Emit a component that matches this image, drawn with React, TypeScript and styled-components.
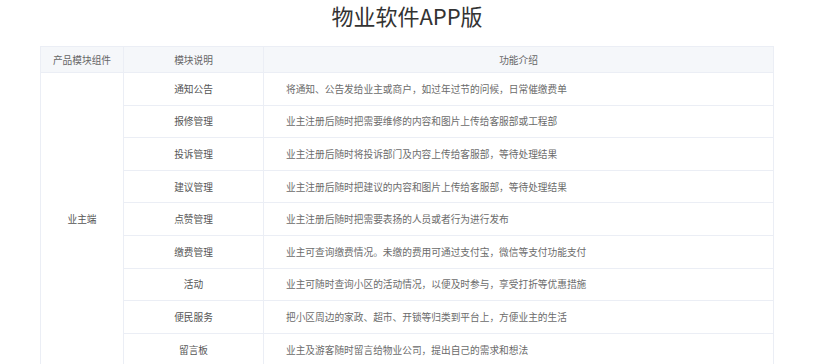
import styled, { createGlobalStyle } from "styled-components";

const GlobalStyle = createGlobalStyle`
  body {
    margin: 0;
    background: #fff;
    font-family: "Noto Sans CJK SC", "Noto Sans", sans-serif;
  }
`;

const Wrapper = styled.section`
  width: 734px;
  margin-left: 40px;
  display: flex;
  flex-direction: column;
  align-items: center;
`;

const Title = styled.h2`
  margin: 0;
  height: 46px;
  font-size: 22px;
  font-weight: 400;
  line-height: 30px;
  color: #333;
`;

const Table = styled.table`
  width: 100%;
  border-collapse: collapse;
  table-layout: fixed;
  border: 1px solid #ebeef5;
  font-size: 9.7px;
`;

const HeadCell = styled.th<{ $width?: number }>`
  width: ${(p) => (p.$width ? `${p.$width}px` : "auto")};
  height: 25px;
  padding: 0;
  background: #f5f7fa;
  border: 1px solid #ebeef5;
  color: #666;
  font-weight: 400;
  text-align: center;
`;

const Cell = styled.td<{ $desc?: boolean }>`
  height: 31.6px;
  padding: 0 ${(p) => (p.$desc ? "22px" : "0")};
  border: 1px solid #ebeef5;
  color: ${(p) => (p.$desc ? "#6b6b6b" : "#555")};
  text-align: ${(p) => (p.$desc ? "left" : "center")};
  white-space: nowrap;
`;

const GroupCell = styled.td`
  padding: 0;
  border: 1px solid #ebeef5;
  color: #555;
  text-align: center;
  vertical-align: middle;
`;

const rows: [string, string][] = [
  ["通知公告", "将通知、公告发给业主或商户，如过年过节的问候，日常催缴费单"],
  ["报修管理", "业主注册后随时把需要维修的内容和图片上传给客服部或工程部"],
  ["投诉管理", "业主注册后随时将投诉部门及内容上传给客服部，等待处理结果"],
  ["建议管理", "业主注册后随时把建议的内容和图片上传给客服部，等待处理结果"],
  ["点赞管理", "业主注册后随时把需要表扬的人员或者行为进行发布"],
  ["缴费管理", "业主可查询缴费情况。未缴的费用可通过支付宝，微信等支付功能支付"],
  ["活动", "业主可随时查询小区的活动情况，以便及时参与，享受打折等优惠措施"],
  ["便民服务", "把小区周边的家政、超市、开锁等归类到平台上，方便业主的生活"],
  ["留言板", "业主及游客随时留言给物业公司，提出自己的需求和想法"],
];

const App = () => (
  <>
    <GlobalStyle />
    <Wrapper>
      <Title>物业软件APP版</Title>
      <Table>
        <thead>
          <tr>
            <HeadCell $width={82}>产品模块组件</HeadCell>
            <HeadCell $width={139}>模块说明</HeadCell>
            <HeadCell>功能介绍</HeadCell>
          </tr>
        </thead>
        <tbody>
          {rows.map(([name, desc], i) => (
            <tr key={name}>
              {i === 0 && <GroupCell rowSpan={rows.length}>业主端</GroupCell>}
              <Cell>{name}</Cell>
              <Cell $desc>{desc}</Cell>
            </tr>
          ))}
        </tbody>
      </Table>
    </Wrapper>
  </>
);

export default App;
